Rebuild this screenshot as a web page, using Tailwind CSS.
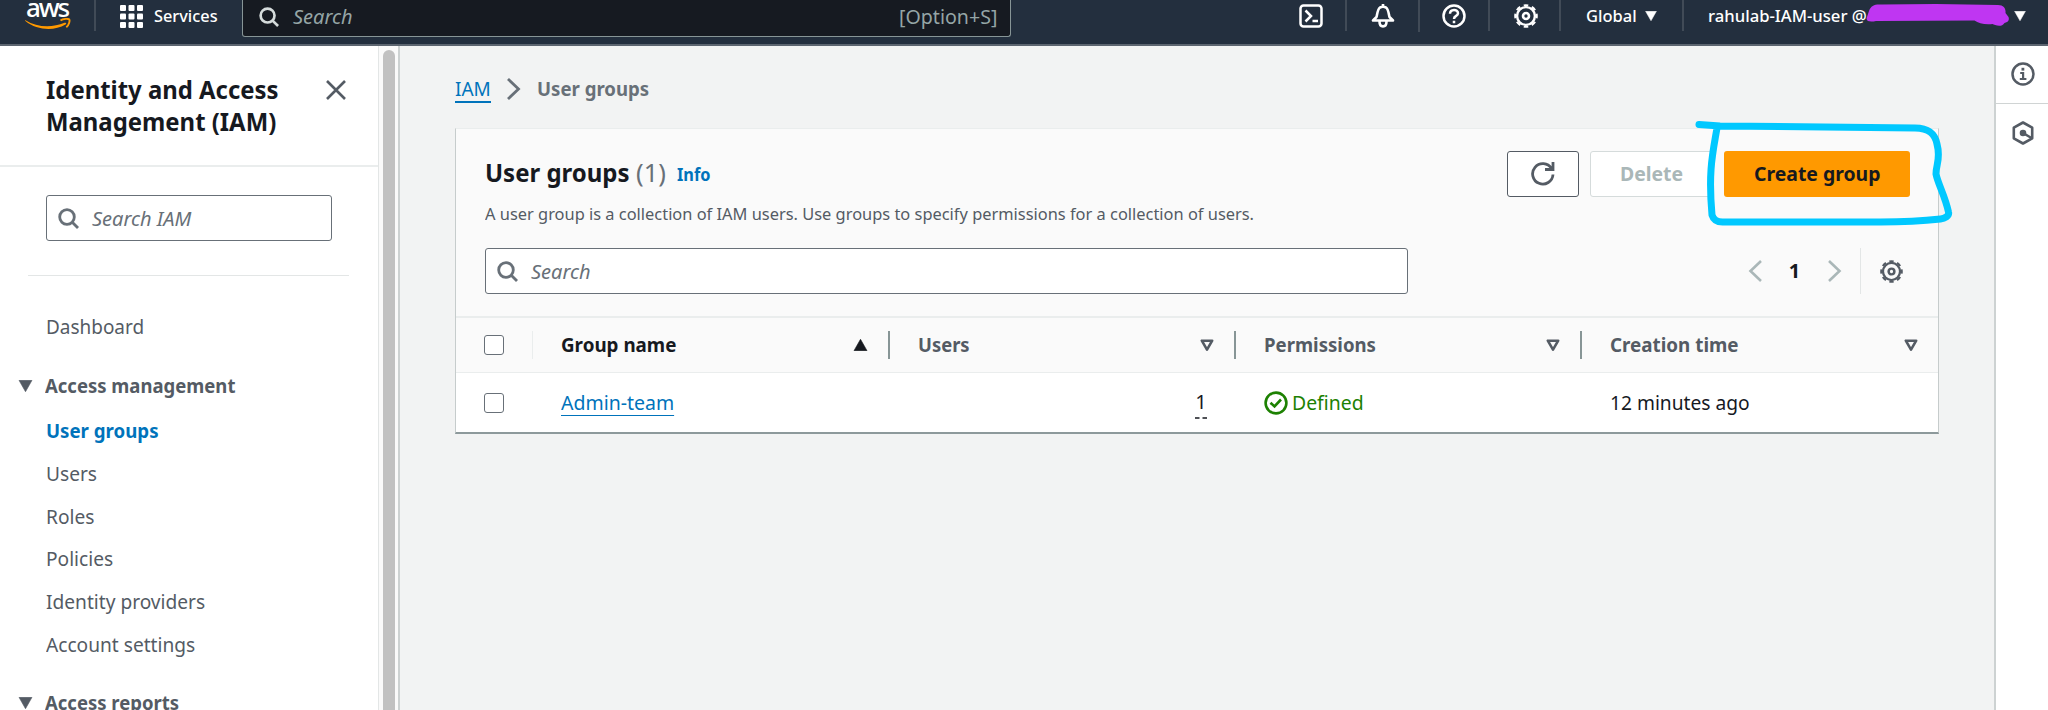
<!DOCTYPE html>
<html lang="en">
<head>
<meta charset="utf-8">
<title>IAM - User groups</title>
<script src="https://cdn.jsdelivr.net/npm/@tailwindcss/browser@4"></script>
</head>
<body class="w-[2048px] h-[710px] overflow-hidden bg-[#f2f3f3] font-['Noto_Sans','Open_Sans',sans-serif] text-[20px] leading-[28px] text-[#16191f] whitespace-nowrap">
<svg class="hidden">
  <symbol id="search" viewBox="0 0 21 21"><g fill="none" stroke="currentColor" stroke-width="2.8"><circle cx="9" cy="9" r="7.3"/><path d="M14 14l6 6"/></g></symbol>
  <symbol id="gear" viewBox="0 0 24 24"><g fill="none" stroke="currentColor"><circle cx="12" cy="12" r="8.900" stroke-width="2.400"/><circle cx="12" cy="12" r="10.700" stroke-width="2.200" pathLength="16" stroke-dasharray="1.100 .9" stroke-dashoffset=".55"/><circle cx="12" cy="12" r="3" stroke-width="2.600"/></g></symbol>
  <symbol id="sort" viewBox="0 0 14 13"><path d="M1.800 1.700h10.400L7 10.600z" fill="none" stroke="currentColor" stroke-width="2.600" stroke-linejoin="round"/></symbol>
  <symbol id="down" viewBox="0 0 14 12"><path d="M.5.3h13L7 11.700z" fill="currentColor" stroke="currentColor" stroke-width=".6" stroke-linejoin="round"/></symbol>
</svg>

<header class="relative flex h-[46px] border-b-2 border-[#5c6570] bg-[#232f3e] text-[17px] text-white font-medium">
  <div class="relative w-[96px] h-[31px] border-r-2 border-[#414b57]">
    <span class="absolute left-[26px] top-[-11px] text-[26px] leading-[36px] tracking-[-2.200px] font-medium">aws</span>
    <svg class="absolute left-[25px] top-[18px]" width="46" height="12" viewBox="0 0 46 12"><path d="M.5 2.200C12 9.500 27 10 39.500 4.800c1.500-.5 2.500.8 1 1.800C29 13.500 12 12.500.4 3.100c-.6-.6-.3-1.100.1-.9z" fill="#ff9900"/><path d="M35.500 2.500c3-2 8-1.900 8.800-1 .7 1-.2 5.500-3 7.800" fill="none" stroke="#ff9900" stroke-width="1.900"/></svg>
  </div>
  <div class="flex w-[146px] h-[32px] items-center pl-[24px] gap-[11px]">
    <svg width="23" height="23" viewBox="0 0 23 23" fill="white"><g id="r"><rect width="6" height="6" rx="1"/><rect x="8.500" width="6" height="6" rx="1"/><rect x="17" width="6" height="6" rx="1"/></g><use href="#r" y="8.500"/><use href="#r" y="17"/></svg>
    <span class="origin-left scale-x-[0.96]">Services</span>
  </div>
  <div class="flex w-[769px] h-[37px] items-center justify-between rounded-b-[3px] border border-t-0 border-[#879596] bg-[#161a21] pl-[16px] pr-[13px] pb-[3px] text-[20px] font-normal text-[#95a5a6]">
    <div class="flex items-center gap-[14px]"><svg class="size-[20px] text-[#d5dbdb]"><use href="#search"/></svg><span class="italic">Search</span></div>
    <span class="origin-right scale-x-[0.98]">[Option+S]</span>
  </div>
  <div class="ml-auto flex h-[31px] items-center">
    <div class="flex w-[71px] h-[31px] items-center justify-center border-r-2 border-[#414b57]"><svg class="ml-px" width="24" height="24" viewBox="0 0 24 24" fill="none" stroke="white" stroke-width="2.500"><rect x="1.500" y="1.500" width="21" height="21" rx="3"/><path d="M6.500 6.500l5.500 5.500-5.500 5.500M13.500 17h5.500"/></svg></div>
    <div class="flex w-[73px] h-[32px] items-center justify-center border-r-2 border-[#414b57]"><svg width="24" height="24" viewBox="0 0 24 24" fill="none" stroke="white" stroke-width="2.600" stroke-linejoin="round"><path d="M12 0v3M2 16.500h20L18.500 13c-.5-1-1-8-3.500-9.500-2-1-4-1-6 0C6.500 5 6 12 5.500 13zM8.500 17.500c0 6.500 7 6.500 7 0"/></svg></div>
    <div class="flex w-[70px] h-[31px] items-center justify-center border-r-2 border-[#414b57]"><svg width="24" height="24" viewBox="0 0 24 24" fill="none" stroke="white" stroke-width="2.500"><circle cx="12" cy="12" r="10.500"/><path d="M8 9.800c0-5 8-5 8-.5 0 3-4 2.200-4 5.700M12 16.700v2.600"/></svg></div>
    <div class="flex w-[71px] h-[31px] items-center justify-center border-r-2 border-[#414b57] text-white"><svg class="ml-[2px] size-[24px]"><use href="#gear"/></svg></div>
    <div class="flex w-[123px] h-[31px] items-center gap-[8px] border-r-2 border-[#414b57] pl-[25px]"><span class="w-[51px] origin-left scale-x-[0.97]">Global</span><svg class="w-[12px] h-[10px]"><use href="#down"/></svg></div>
    <div class="flex w-[364px] h-[31px] items-center pl-[24px]"><span class="w-[158px] origin-left scale-x-[0.98]">rahulab-IAM-user @</span>
      <svg width="144" height="26" viewBox="0 0 144 26"><path d="M3 8C5 2 9 1 16 1.500L70 1l62 1c6 0 8 4 7.500 8l3 4c1 3 0 5-4 6-3 5-10 2-12 1-8 1-14-1-18-3.500L10 18c-5 1-11 1-9-4z" fill="#bf36f2"/></svg>
      <svg class="ml-[4px] w-[12px] h-[10px]"><use href="#down"/></svg></div>
  </div>
</header>

<div class="flex h-[664px]">
  <aside class="w-[379px] shrink-0 border-r border-[#e3e6e6] bg-white text-[#545b64]">
    <div class="flex h-[121px] justify-between border-b-2 border-[#eaeded] pl-[46px] pr-[32px] pt-[28px]">
      <h2 class="origin-left scale-x-[0.937] text-[25.500px] leading-[31.500px] font-bold text-[#16191f]">Identity and Access<br>Management (IAM)</h2>
      <svg class="mt-[6px]" width="20" height="20" viewBox="0 0 20 20" stroke="#545b64" stroke-width="2.600"><path d="M1 1l18 18M19 1L1 19"/></svg>
    </div>
    <div class="mt-[28px] ml-[46px] flex h-[46px] w-[286px] items-center gap-[13px] rounded-[3px] border-[1.500px] border-[#687078] pl-[11px] italic text-[#687078]"><svg class="size-[21px]"><use href="#search"/></svg><span class="mt-px">Search IAM</span></div>
    <hr class="mt-[34px] ml-[28px] w-[321px] border-[#e3e6e6]">
    <nav class="pl-[46px]">
      <div class="mt-[37px] h-[28px] origin-left scale-x-[0.947]">Dashboard</div>
      <div class="mt-[31px] ml-[-28px] flex h-[28px] items-center gap-[12px] font-bold"><svg class="mt-[-1px] w-[15px] h-[12px]"><use href="#down"/></svg><span class="origin-left scale-x-[0.925]">Access management</span></div>
      <ul class="mt-[10px] origin-left scale-x-[0.957] leading-[42.800px]">
        <li class="origin-left scale-x-[0.975] font-bold text-[#0073bb]">User groups</li><li>Users</li><li>Roles</li><li>Policies</li><li>Identity providers</li><li>Account settings</li>
      </ul>
      <div class="mt-[22px] ml-[-28px] flex h-[28px] items-center gap-[12px] font-bold"><svg class="w-[15px] h-[12px]"><use href="#down"/></svg><span class="origin-left scale-x-[0.925]">Access reports</span></div>
    </nav>
  </aside>
  <div class="w-[21px] shrink-0 border-r-2 border-[#cdd2d2] bg-[#fafafa] pl-[4px] pt-[4px]"><div class="h-[680px] w-[12px] rounded-full bg-[#c1c1c1]"></div></div>

  <main class="w-[1594px] shrink-0 pl-[55px]">
    <div class="flex h-[82px] items-center pt-[5px] pb-px">
      <a class="mt-[2px] w-[36px] border-b-2 border-[#0073bb] leading-[24px] text-[#0073bb]"><span class="inline-block origin-left scale-x-[0.95]">IAM</span></a>
      <svg class="ml-[15px]" width="15" height="22" viewBox="0 0 15 22" fill="none" stroke="#687078" stroke-width="2.800"><path d="M2 1l10.500 10L2 21"/></svg>
      <span class="ml-[16px] origin-left scale-x-[0.93] font-bold text-[#687078]">User groups</span>
    </div>
    <section class="relative w-[1484px] h-[306px] border border-x-[#c6cccc] border-t-[#eaeded] border-b-2 border-b-[#8d999b] bg-[#fafafa]">
      <div class="flex h-[187px] flex-col pl-[29px] pr-[28px]">
        <div class="flex h-[68px] items-start pt-[22px]">
          <h1 class="mt-[3px] flex text-[25.500px] leading-[36px] font-bold"><span class="w-[151px] origin-left scale-x-[0.94]">User groups</span><span class="font-normal text-[#687078]">(1)</span></h1>
          <span class="mt-[11px] ml-[11px] origin-left scale-x-[0.96] text-[17px] leading-[26px] font-bold text-[#0073bb]">Info</span>
          <div class="ml-auto flex gap-[11px] font-bold">
            <div class="flex h-[46px] w-[72px] items-center justify-center rounded-[3px] border-[1.500px] border-[#545b64] bg-white"><svg width="24" height="24" viewBox="0 0 24 24" fill="none" stroke="#545b64" stroke-width="2.800"><path d="M20.500 6.500A10.200 10.200 0 1 0 22 12.500M22 0v7.500h-8"/></svg></div>
            <div class="flex h-[46px] w-[123px] items-center justify-center rounded-[3px] border-[1.500px] border-[#d5dbdb] bg-white text-[#aab7b8]"><span class="scale-x-[0.97]">Delete</span></div>
            <div class="flex h-[46px] w-[186px] items-center justify-center rounded-[3px] bg-[#ff9900] text-[#16191f]"><span class="scale-x-[0.97]">Create group</span></div>
          </div>
        </div>
        <p class="mt-[3px] origin-left scale-x-[0.965] text-[17px] leading-[28px] text-[#545b64]">A user group is a collection of IAM users. Use groups to specify permissions for a collection of users.</p>
        <div class="mt-[20px] flex h-[46px] items-center">
          <div class="flex h-[46px] w-[923px] items-center gap-[13px] rounded-[3px] border-[1.500px] border-[#687078] bg-white pl-[11px] italic text-[#687078]"><svg class="size-[21px]"><use href="#search"/></svg><span class="mt-px">Search</span></div>
          <div class="ml-auto flex h-[46px] items-center">
            <svg width="14" height="22" viewBox="0 0 14 22" fill="none" stroke="#aab7b8" stroke-width="2.600"><path d="M13 1L2.500 11 13 21"/></svg>
            <span class="w-[66px] pr-px text-center font-bold">1</span>
            <svg width="14" height="22" viewBox="0 0 14 22" fill="none" stroke="#aab7b8" stroke-width="2.600"><path d="M1 1l10.500 10L1 21"/></svg>
            <div class="ml-[18px] mr-[7px] flex h-[46px] items-center border-l border-[#e3e6e6] pl-[19px] text-[#545b64]"><svg class="size-[23px]"><use href="#gear"/></svg></div>
          </div>
        </div>
      </div>
      <div class="grid h-[57px] grid-cols-[77px_357px_346px_346px_356px] items-center border-y border-[#eaeded] border-t-2 font-bold text-[#545b64]">
        <div class="flex h-[28px] items-center border-r border-[#eaeded] pl-[28px]"><i class="size-[20px] rounded-[3px] border-[1.500px] border-[#687078] bg-white"></i></div>
        <div class="flex h-[28px] items-center justify-between border-r-2 border-[#879596] pl-[28px] pr-[20px] text-[#16191f]"><span class="origin-left scale-x-[0.94]">Group name</span><svg class="w-[15px] h-[12px] rotate-180"><use href="#down"/></svg></div>
        <div class="flex h-[28px] items-center justify-between border-r-2 border-[#879596] pl-[28px] pr-[20px]"><span class="origin-left scale-x-[0.92]">Users</span><svg class="w-[14px] h-[13px]"><use href="#sort"/></svg></div>
        <div class="flex h-[28px] items-center justify-between border-r-2 border-[#879596] pl-[28px] pr-[20px]"><span class="origin-left scale-x-[0.93]">Permissions</span><svg class="w-[14px] h-[13px]"><use href="#sort"/></svg></div>
        <div class="flex h-[28px] items-center justify-between pl-[28px] pr-[20px]"><span class="origin-left scale-x-[0.94]">Creation time</span><svg class="w-[14px] h-[13px]"><use href="#sort"/></svg></div>
      </div>
      <div class="grid h-[59px] grid-cols-[77px_357px_346px_346px_356px] items-center bg-white">
        <div class="pl-[28px]"><i class="block size-[20px] rounded-[3px] border-[1.500px] border-[#687078] bg-white"></i></div>
        <div class="pl-[28px]"><a class="inline-block origin-left scale-x-[0.975] border-b-[1.500px] border-[#0073bb] leading-[25px] text-[#0073bb]">Admin-team</a></div>
        <div class="flex justify-end pr-[29px]"><div class="flex flex-col items-center gap-[3px] pt-[3px] leading-[24px]">1<svg width="12" height="2"><path d="M0 1h4.500M7.500 1h4.500" stroke="#16191f" stroke-width="1.500"/></svg></div></div>
        <div class="flex items-center gap-[4px] pl-[28px] text-[#1d8102]"><svg width="24" height="24" viewBox="0 0 24 24" fill="none" stroke="#1d8102" stroke-width="2.600"><circle cx="12" cy="12" r="10.400"/><path d="M6.500 11.800l4 3.700 6.500-7"/></svg><span class="origin-left scale-x-[0.97]">Defined</span></div>
        <div class="pl-[28px]"><span class="inline-block origin-left scale-x-[0.96]">12 minutes ago</span></div>
      </div>
      <svg class="absolute left-[1234px] top-[-12px]" width="270" height="120" viewBox="1690 116 270 120" fill="none" stroke="#00c8ff" stroke-width="7" stroke-linecap="round" stroke-linejoin="round"><path d="M1699 123.500L1720 125l195 2c14 0 20 6 22 16 4 15-1 20-1 30 2 10 9 22 12.500 38 1 4-4 6.500-8 7-18 2-40 3-60 3h-158c-5 0-9-2-10.500-7-4-45 1-63 5-87"/></svg>
    </section>
  </main>
  <aside class="w-[54px] border-l-2 border-[#cdd2d2] bg-white">
    <div class="flex h-[58px] items-center justify-center border-b border-[#d0d4d4] pb-[2px]"><svg class="mt-px ml-[2px]" width="24" height="24" viewBox="0 0 24 24" fill="none" stroke="#545b64" stroke-width="2.500"><circle cx="12" cy="12" r="10.500"/><path d="M10.500 7.200h2.800" stroke-width="2.800"/><path d="M9.200 11h2.900v6M8.800 17h6.600" stroke-width="2.200"/></svg></div>
    <div class="flex h-[58px] items-center justify-center"><svg class="ml-[2px]" width="24" height="24" viewBox="0 0 24 24" fill="none" stroke="#545b64" stroke-width="2.600" stroke-linejoin="round"><path d="M12 1.500l9.200 5.200v10.600L12 22.500l-9.200-5.200V6.700z"/><circle cx="12" cy="12" r="2" fill="#545b64"/><path d="M12 12l8.500 5"/></svg></div>
  </aside>
</div>
</body>
</html>
